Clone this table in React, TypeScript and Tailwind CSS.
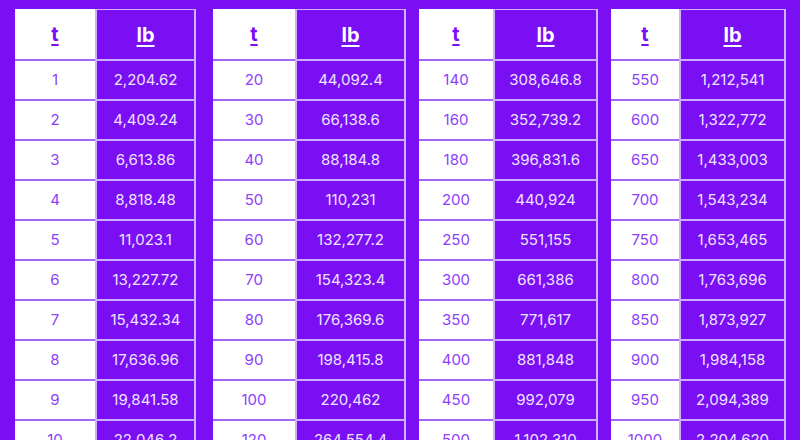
import React from "react";

type Row = [string, string];

const tables: { tw: string; lw: string; ml: string; rows: Row[] }[] = [
  {
    tw: "w-[80px]",
    lw: "w-[101px]",
    ml: "ml-[15px]",
    rows: [
      ["1", "2,204.62"],
      ["2", "4,409.24"],
      ["3", "6,613.86"],
      ["4", "8,818.48"],
      ["5", "11,023.1"],
      ["6", "13,227.72"],
      ["7", "15,432.34"],
      ["8", "17,636.96"],
      ["9", "19,841.58"],
      ["10", "22,046.2"],
    ],
  },
  {
    tw: "w-[82px]",
    lw: "w-[111px]",
    ml: "ml-[17px]",
    rows: [
      ["20", "44,092.4"],
      ["30", "66,138.6"],
      ["40", "88,184.8"],
      ["50", "110,231"],
      ["60", "132,277.2"],
      ["70", "154,323.4"],
      ["80", "176,369.6"],
      ["90", "198,415.8"],
      ["100", "220,462"],
      ["120", "264,554.4"],
    ],
  },
  {
    tw: "w-[74px]",
    lw: "w-[105px]",
    ml: "ml-[13px]",
    rows: [
      ["140", "308,646.8"],
      ["160", "352,739.2"],
      ["180", "396,831.6"],
      ["200", "440,924"],
      ["250", "551,155"],
      ["300", "661,386"],
      ["350", "771,617"],
      ["400", "881,848"],
      ["450", "992,079"],
      ["500", "1,102,310"],
    ],
  },
  {
    tw: "w-[68px]",
    lw: "w-[107px]",
    ml: "ml-[13px]",
    rows: [
      ["550", "1,212,541"],
      ["600", "1,322,772"],
      ["650", "1,433,003"],
      ["700", "1,543,234"],
      ["750", "1,653,465"],
      ["800", "1,763,696"],
      ["850", "1,873,927"],
      ["900", "1,984,158"],
      ["950", "2,094,389"],
      ["1000", "2,204,620"],
    ],
  },
];

const ConversionTable = ({ tw, lw, ml, rows }: (typeof tables)[number]) => (
  <div className={`flex shrink-0 ${ml}`}>
    <div className={`flex flex-col bg-white ${tw}`}>
      <div className="flex h-[52px] items-center justify-center border-b-2 border-[#a667f8] text-[20px] font-bold text-[#7a10f4] underline underline-offset-[3px] decoration-2">
        t
      </div>
      {rows.map(([t]) => (
        <div
          key={t}
          className="flex h-[40px] shrink-0 items-center justify-center border-b-2 border-[#a667f8] text-[15px] text-[#8d40fb]"
        >
          {t}
        </div>
      ))}
    </div>
    <div className={`flex flex-col border-x-2 border-t border-[#cdb0fb] ${lw}`}>
      <div className="flex h-[51px] items-center justify-center border-b-2 border-[#cdb0fb] text-[20px] font-bold text-white underline underline-offset-[3px] decoration-2">
        lb
      </div>
      {rows.map(([t, lb]) => (
        <div
          key={t}
          className="flex h-[40px] shrink-0 items-center justify-center border-b-2 border-[#cdb0fb] text-[15px] text-[#efe4ff]"
        >
          {lb}
        </div>
      ))}
    </div>
  </div>
);

export default function App() {
  return (
    <div className="flex h-[440px] w-[800px] items-start overflow-hidden bg-[#7a0ff4] pt-[9px] font-['Inter',sans-serif]">
      {tables.map((tb, i) => (
        <ConversionTable key={i} {...tb} />
      ))}
    </div>
  );
}
